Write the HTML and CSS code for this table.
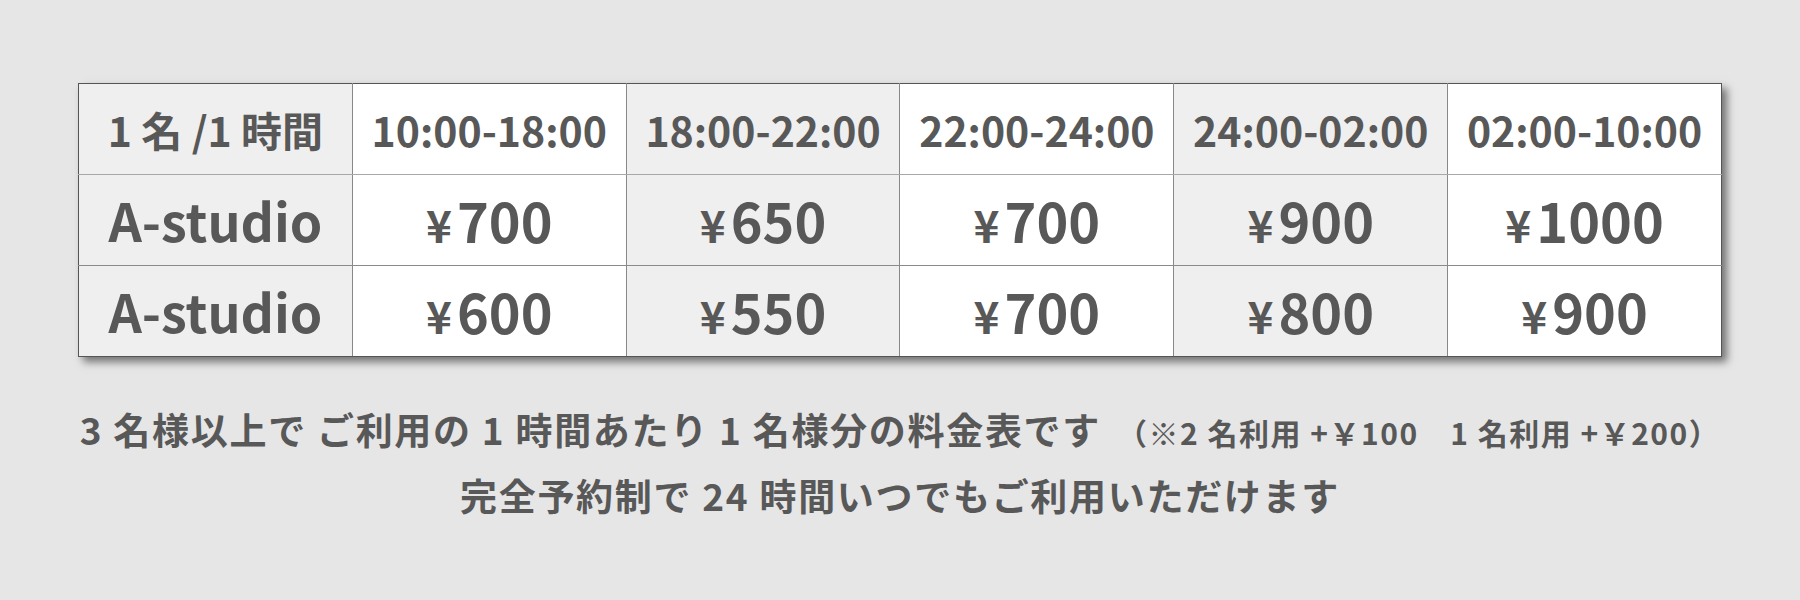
FILE: index.html
```html
<!DOCTYPE html>
<html lang="ja">
<head>
<meta charset="utf-8">
<link rel="stylesheet" href="styles.css">
</head>
<body>
<main class="page">
  <table class="price">
    <tr class="head">
      <td class="shade">1 名 /1 時間</td>
      <td>10:00-18:00</td>
      <td class="shade">18:00-22:00</td>
      <td>22:00-24:00</td>
      <td class="shade">24:00-02:00</td>
      <td>02:00-10:00</td>
    </tr>
    <tr class="big mid">
      <td class="shade">A-studio</td>
      <td><span class="yen">¥</span>700</td>
      <td class="shade"><span class="yen">¥</span>650</td>
      <td><span class="yen">¥</span>700</td>
      <td class="shade"><span class="yen">¥</span>900</td>
      <td><span class="yen">¥</span>1000</td>
    </tr>
    <tr class="big">
      <td class="shade">A-studio</td>
      <td><span class="yen">¥</span>600</td>
      <td class="shade"><span class="yen">¥</span>550</td>
      <td><span class="yen">¥</span>700</td>
      <td class="shade"><span class="yen">¥</span>800</td>
      <td><span class="yen">¥</span>900</td>
    </tr>
  </table>
  <p class="note first">3 名様以上で ご利用の 1 時間あたり 1 名様分の料金表です<span class="sub">（※2 名利用 +￥100　1 名利用 +￥200）</span></p>
  <p class="note">完全予約制で 24 時間いつでもご利用いただけます</p>
</main>
</body>
</html>
```
FILE: styles.css
```css
html, body {
  margin: 0;
  padding: 0;
  background: #e6e6e6;
}
.page {
  width: 1800px;
  height: 600px;
  padding-top: 83px;
  box-sizing: border-box;
  font-family: "Noto Sans CJK JP", "Noto Sans", sans-serif;
  font-weight: 700;
  color: #585858;
}
.price {
  width: 1644px;
  margin: 0 auto;
  border-collapse: collapse;
  table-layout: fixed;
  background: #ffffff;
  border: 1px solid #555555;
  box-shadow: 5px 5px 8px rgba(0, 0, 0, 0.5);
}
.price td {
  border-left: 1px solid #888888;
  border-right: 1px solid #888888;
  border-top: 1px solid #8a8a8a;
  border-bottom: 1px solid #8a8a8a;
  height: 90px;
  padding: 0;
  text-align: center;
  vertical-align: middle;
  font-size: 41px;
  line-height: 1;
  background: #ffffff;
}
.price td.shade {
  background: #efefef;
}
.price tr.head td {
  border-top-color: #555555;
  border-bottom-color: #a8a8a8;
}
.price tr.mid td {
  border-top-color: #a8a8a8;
}
.price tr:last-child td {
  border-bottom-color: #555555;
}
.price td:first-child {
  border-left-color: #555555;
}
.price td:last-child {
  border-right-color: #555555;
}
.price tr.big td {
  font-size: 54px;
}
.price tr.big td:first-child {
  font-size: 52px;
}
.yen {
  font-size: 44px;
  margin-right: 5px;
}
.note {
  margin: 0;
  text-align: center;
  font-size: 37px;
  letter-spacing: 1.7px;
  line-height: 63px;
}
.note.first {
  margin-top: 41px;
}
.sub {
  font-size: 30px;
  letter-spacing: 1.5px;
  margin-left: 16px;
}
```
